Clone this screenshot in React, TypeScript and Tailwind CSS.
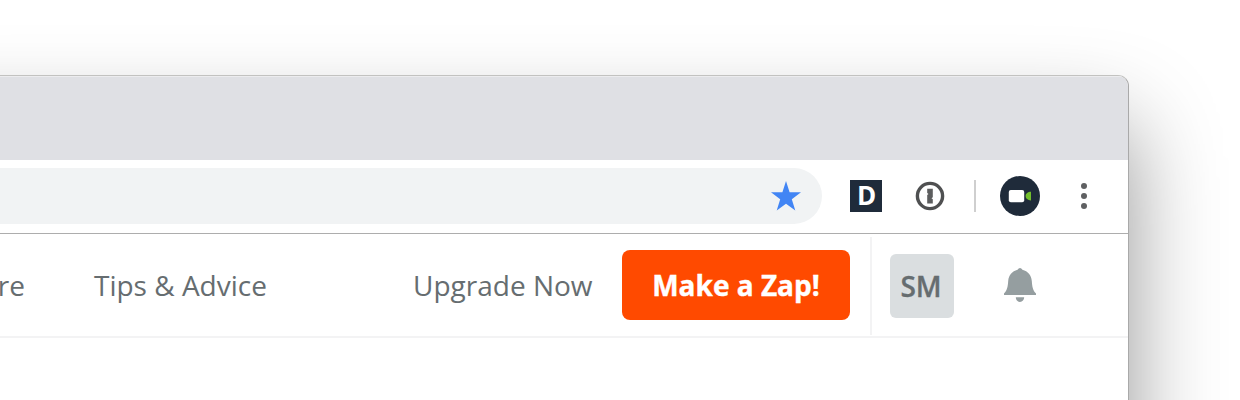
import { clsx } from 'clsx';

function StarIcon({ className }: { className?: string }) {
  return (
    <svg viewBox="0 0 30 29" preserveAspectRatio="none" className={className} fill="#4285f4">
      <path d="M15 0l3.6 10.8H30l-9.2 6.8L24.3 28.5 15 21.9 5.7 28.5l3.5-10.9L0 10.8h11.4z" />
    </svg>
  );
}

function OnePasswordIcon() {
  return (
    <svg viewBox="0 0 30 30" className="h-[30px] w-[30px]">
      <circle cx="15" cy="15" r="12.6" fill="none" stroke="#4f5051" strokeWidth="3.4" />
      <path d="M12.2 7.8h5.6v8.4l-1.3 1 1.3 1v4.2h-5.6V14l1.3-1-1.3-1z" fill="#5c5d5e" />
    </svg>
  );
}

function ZoomAvatar() {
  return (
    <svg viewBox="0 0 40 40" className="h-10 w-10">
      <circle cx="20" cy="20" r="20" fill="#1f2b3a" />
      <rect x="8.8" y="14" width="15.4" height="12.2" rx="2" fill="#fff" />
      <path d="M31 15.8v8.6c-3.2 0-5.4-1.9-5.4-4.3s2.2-4.3 5.4-4.3z" fill="#72be2c" />
    </svg>
  );
}

function BellIcon() {
  return (
    <svg viewBox="0 0 32 34" className="h-[34px] w-8" fill="#959ea0">
      <path d="M16 0c1 0 1.600.7 2.400 1.800C24 3.400 27.300 7.200 27.800 13c.4 5.500.9 9.300 4.200 12.600V27H0v-1.400C3.300 22.300 3.800 18.500 4.200 13 4.700 7.200 8 3.400 13.600 1.800 14.400.7 15 0 16 0z" />
      <path d="M11.800 29.300h8.400c0 2.700-1.800 4.600-4.200 4.600s-4.200-1.900-4.200-4.600z" />
    </svg>
  );
}

function Toolbar() {
  return (
    <div className="flex h-[74px] items-center border-b border-[#adadad] bg-white">
      <div className="-mt-px flex h-14 w-[922px] items-center justify-end rounded-r-full bg-[#f1f3f4] pr-[21px]">
        <StarIcon className="h-[30px] w-[30px]" />
      </div>
      <div className="-mt-0.5 ml-7 flex h-8 w-8 items-center justify-center bg-[#1f2b3a] pb-0.5 pl-px text-[26px] leading-none font-bold text-white">
        D
      </div>
      <div className="-mt-0.5 ml-[33px]">
        <OnePasswordIcon />
      </div>
      <div className="-mt-0.5 ml-[29px] h-8 w-0.5 bg-[#cfcfcf]" />
      <div className="-mt-0.5 ml-6">
        <ZoomAvatar />
      </div>
      <div className="-mt-0.5 ml-[41px] flex flex-col gap-1">
        {[0, 1, 2].map((dot) => (
          <span key={dot} className="h-1.5 w-1.5 rounded-full bg-[#5f6062]" />
        ))}
      </div>
    </div>
  );
}

function NavLink({ label, className }: { label: string; className?: string }) {
  return (
    <a className={clsx('text-[28px] leading-none whitespace-nowrap text-[#666d70]', className)}>
      {label}
    </a>
  );
}

function Header() {
  return (
    <header className="flex h-[104px] items-center border-b-2 border-[#f3f3f4] bg-white">
      <NavLink label="Explore" className="w-[125px] text-right" />
      <NavLink label="Tips & Advice" className="ml-[69px] w-[319px]" />
      <NavLink label="Upgrade Now" className="w-[209px]" />
      <button className="flex h-[70px] w-[228px] items-center justify-center rounded-lg bg-[#ff4a00] text-[28px] leading-none font-bold whitespace-nowrap text-white [-webkit-text-stroke:0.4px_white]">
        Make a Zap!
      </button>
      <div className="mt-0.5 ml-5 h-[98px] w-0.5 bg-[#f3f3f4]" />
      <div className="mt-0.5 ml-[18px] flex h-16 w-16 items-center justify-center rounded-md bg-[#dadee0] pr-0.5 text-[28px] leading-none font-semibold text-[#666d70] [-webkit-text-stroke:0.3px_#666d70]">
        SM
      </div>
      <div className="ml-[50px]">
        <BellIcon />
      </div>
    </header>
  );
}

export default function App() {
  return (
    <div className="h-[400px] w-[1240px] overflow-hidden bg-white pt-[75px] font-['Open_Sans','Noto_Sans',sans-serif]">
      <div className="-ml-[101px] h-[600px] w-[1230px] overflow-hidden rounded-[11px] border border-t-[#c2c2c0] border-r-[#a9a9a9] border-l-[#a9a9a9] bg-white shadow-[0_50px_90px_rgba(0,0,0,0.42)]">
        <div className="h-[84px] border-t border-[#ececee] bg-[#dfe0e4]" />
        <Toolbar />
        <Header />
      </div>
    </div>
  );
}
